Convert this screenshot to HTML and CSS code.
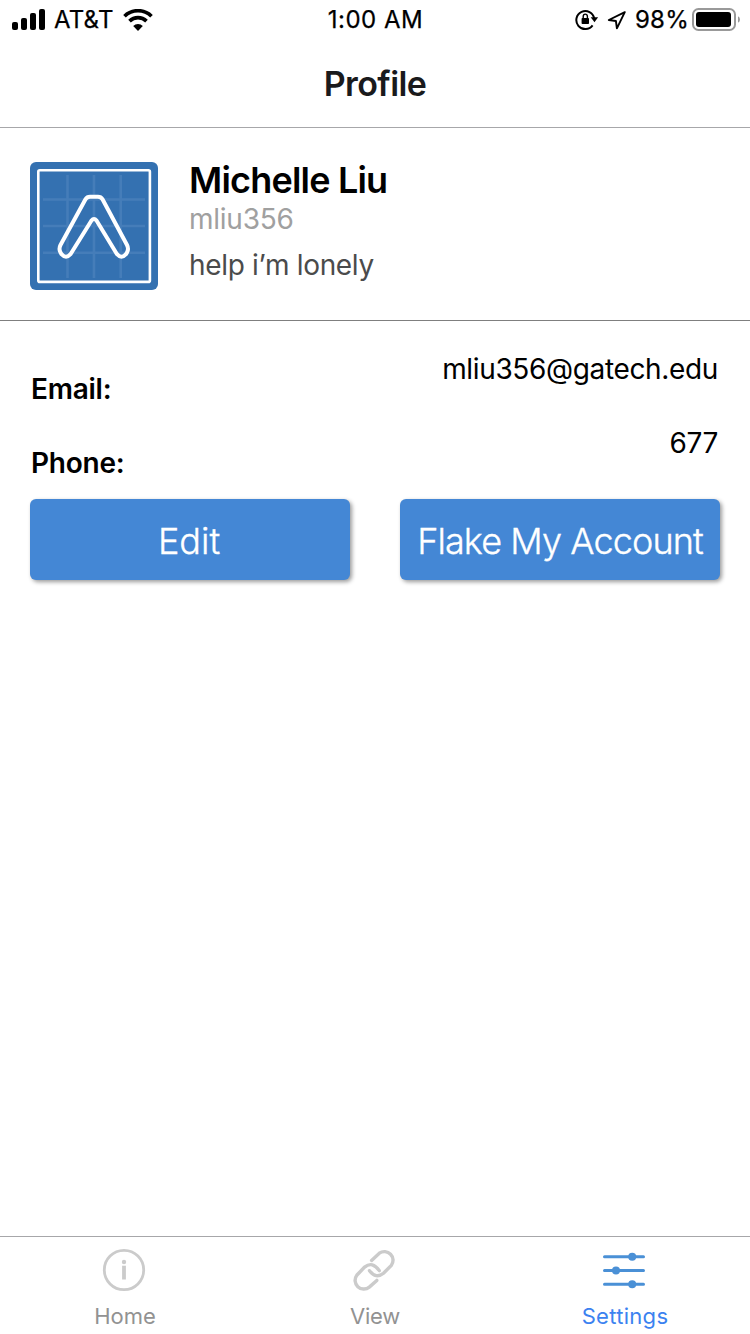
FILE: index.html
```html
<!DOCTYPE html>
<html lang="en">
<head>
<meta charset="utf-8">
<title>Profile</title>
<link rel="stylesheet" href="styles.css">
</head>
<body>
<div class="screen">
  <div class="status">
    <div class="status-left">
      <svg class="signal" width="34" height="22" viewBox="0 0 34 22"><rect x="0" y="13" width="6" height="8" rx="2"/><rect x="9" y="9" width="6" height="12" rx="2"/><rect x="18" y="4" width="6" height="17" rx="2"/><rect x="27" y="0" width="6" height="21" rx="2"/></svg>
      <span class="carrier">AT&amp;T</span>
      <svg class="wifi" width="30" height="22" viewBox="0 0 30 22"><path d="M1.5 7.2a19.3 19.3 0 0 1 27 0M6.5 12.1a12.2 12.2 0 0 1 17 0" fill="none" stroke="#000" stroke-width="3.7"/><path d="M10.2 17a6.9 6.9 0 0 1 9.6 0L15 21.9z"/></svg>
    </div>
    <span class="clock">1:00 AM</span>
    <div class="status-right">
      <svg class="lock" width="24" height="22" viewBox="0 0 24 22"><path d="M17.6 16.4A9 9 0 1 1 19.2 9.5" fill="none" stroke="#000" stroke-width="2"/><path d="M15.7 8.3h7.4l-3.6 5z"/><rect x="6.6" y="9" width="7.4" height="6" rx=".8"/><path d="M8.2 9.5V7.4a2.1 2.3 0 0 1 4.2 0v2.1" fill="none" stroke="#000" stroke-width="1.4"/></svg>
      <svg class="arrow" width="20" height="20" viewBox="0 0 20 20"><path d="M17.8 2.2 1.8 10l7.1 1 1 7.4z" fill="none" stroke="#000" stroke-width="1.9" stroke-linejoin="round"/></svg>
      <span class="percent">98%</span>
      <svg class="battery" width="49" height="24" viewBox="0 0 49 24"><rect x="1" y="1" width="42" height="21" rx="5.5" fill="none" stroke="#999" stroke-width="2"/><rect x="4" y="4" width="35" height="15" rx="3"/><path d="M46 8.2q2 1 2 3.3t-2 3.3z" fill="#999"/></svg>
    </div>
  </div>
  <header class="title">Profile</header>
  <section class="profile">
    <svg class="avatar" width="128" height="128" viewBox="0 0 128 128">
      <rect width="128" height="128" rx="6" fill="#3471b1"/>
      <path d="M37.5 13v103M64 13v103M90.700 13v103M13 37.500h102M13 64h102M13 90.700h102" stroke="#457db9" stroke-width="2.600"/>
      <rect x="8.300" y="8.300" width="111.600" height="111.600" rx="1.500" fill="none" stroke="#fff" stroke-width="2.600"/>
      <path d="M60 34.800h8q3 0 4.500 2.500L97 83q2 4 0 7.500l-1 1.700q-4.500 5-9 0L66.500 58.500q-2.500-3-5 0L40.500 92.200q-4.500 5-9 0l-1-1.700q-2-3.500 0-7.500L55.500 37.300q1.500-2.500 4.500-2.500z" fill="none" stroke="#fff" stroke-width="4" stroke-linejoin="round"/>
    </svg>
    <div class="who">
      <div class="name">Michelle Liu</div>
      <div class="user">mliu356</div>
      <div class="bio">help i’m lonely</div>
    </div>
  </section>
  <main class="details">
    <div class="row"><span class="label">Email:</span><span class="value address">mliu356@gatech.edu</span></div>
    <div class="row"><span class="label">Phone:</span><span class="value">677</span></div>
    <div class="actions">
      <button class="btn edit">Edit</button>
      <button class="btn flake">Flake My Account</button>
    </div>
  </main>
  <nav class="tabs">
    <div class="tab">
      <svg width="44" height="44" viewBox="0 0 44 44"><circle cx="22" cy="22" r="19.700" fill="none" stroke="#cbcbcb" stroke-width="2.800"/><circle cx="22" cy="14" r="2.200" fill="#cbcbcb"/><path d="M22 17.700v13.800" stroke="#cbcbcb" stroke-width="3.800"/></svg>
      <span class="home">Home</span>
    </div>
    <div class="tab">
      <svg width="44" height="44" viewBox="0 0 44 44" fill="none" stroke="#cbcbcb" stroke-width="3.400" stroke-linecap="round"><path d="M19.600 12.400 27.300 5.200A8.700 8.700 0 0 1 39.300 17.500L31.500 25.200Q24 31.300 17.500 22.700"/><path d="M24.800 32.400 17.300 39.100A8.700 8.700 0 0 1 4.800 27.200L12.600 19.100Q20.500 12.800 27.300 22.600"/></svg>
      <span class="view">View</span>
    </div>
    <div class="tab active">
      <svg width="44" height="44" viewBox="0 0 44 44"><path d="M2.500 8.700h39M2.500 22.400h39M2.500 36.200h39" stroke="#4a90d6" stroke-width="3" stroke-linecap="round"/><circle cx="30.200" cy="8.700" r="4" fill="#4a90d6"/><circle cx="14" cy="22.400" r="4" fill="#4a90d6"/><circle cx="30.200" cy="36.200" r="4" fill="#4a90d6"/></svg>
      <span class="settings">Settings</span>
    </div>
  </nav>
</div>
</body>
</html>
```
FILE: styles.css
```css
* { box-sizing: border-box; }
body { margin: 0; background: #fff; color: #000; font-family: Inter, "Liberation Sans", sans-serif; }
svg { display: block; flex: none; }
.screen { display: flex; flex-direction: column; width: 750px; height: 1334px; overflow: hidden; }
.status { display: grid; grid-template-columns: 1fr auto 1fr; height: 40px; align-items: center; font-size: 24px; font-weight: 400; line-height: 40px; white-space: nowrap; -webkit-text-stroke: 0.25px #000; }
.status-left, .status-right { display: flex; align-items: center; }
.status-left { padding-left: 12px; }
.status-right { justify-content: flex-end; padding-right: 9px; }
.carrier { width: 69px; margin-left: 8px; letter-spacing: 0.2px; }
.clock { padding-left: 1px; letter-spacing: 0.5px; }
.lock { margin-right: 8px; }
.arrow { margin-right: 8px; }
.percent { width: 57px; letter-spacing: 0.2px; }
.title { height: 88px; border-bottom: 1px solid #a7a7aa; color: #1a1a1c; font-size: 34px; font-weight: 600; line-height: 87px; letter-spacing: -0.6px; text-align: center; }
.profile { display: flex; gap: 31px; padding: 34px 30px 30px; height: 193px; border-bottom: 1px solid #7f7f7f; }
.name { font-size: 36px; font-weight: 600; line-height: 37px; letter-spacing: -0.8px; }
.user { color: #a0a0a0; font-size: 28px; line-height: 40px; letter-spacing: -0.25px; }
.bio { color: #4b4b4b; font-size: 28px; line-height: 52px; letter-spacing: -0.32px; }
.details { flex: 1; padding: 30px 30px 0; }
.row { display: flex; justify-content: space-between; height: 74px; padding-right: 2px; font-size: 28px; line-height: 36px; }
.value { letter-spacing: -0.35px; }
.label { padding: 20px 0 0 1px; font-weight: 600; letter-spacing: -0.25px; }
.actions { display: flex; justify-content: space-between; }
.btn { width: 320px; height: 81px; padding: 4px 0 0; border: 0; border-radius: 6px; background: #4487d5; box-shadow: 2px 2px 4px rgba(0, 0, 0, 0.4); color: #fff; font-family: inherit; font-size: 36px; font-weight: 300; line-height: 77px; white-space: nowrap; -webkit-text-stroke: 0.35px #fff; }
.edit { padding-right: 2px; }
.flake { letter-spacing: -0.9px; }
.tabs { display: flex; height: 98px; border-top: 1px solid #a7a7aa; }
.tab { flex: 1; display: flex; flex-direction: column; align-items: center; padding-top: 11px; color: #929292; font-size: 22px; line-height: 24px; }
.tab svg { margin: 0 2px 12px 0; }
.view { letter-spacing: -0.2px; }
.settings { letter-spacing: 0.3px; }
.active { color: #3b82f0; }
```
